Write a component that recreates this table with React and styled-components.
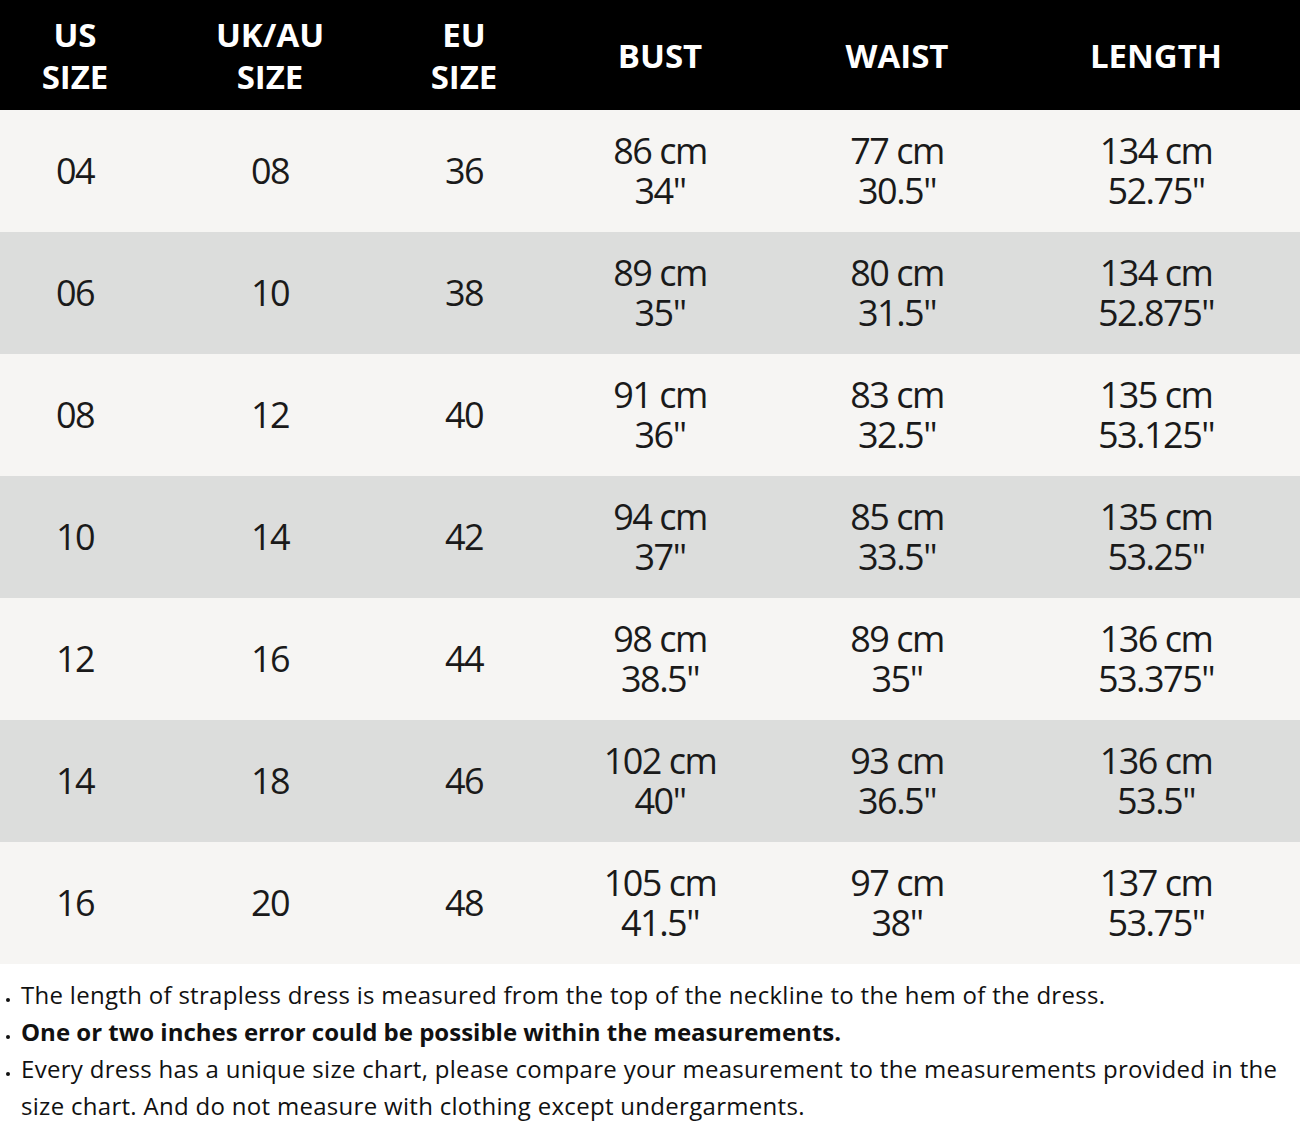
import React from 'react'
import styled, { createGlobalStyle } from 'styled-components'

const GlobalStyle = createGlobalStyle`
  html, body {
    margin: 0;
    padding: 0;
    background: #ffffff;
  }
  body {
    font-family: "Open Sans", "Noto Sans", sans-serif;
    color: #111;
  }
`

const Page = styled.div`
  width: 1300px;
  background: #fff;
`

const Table = styled.div`
  display: grid;
  grid-template-columns: 150px 240px 148px 244px 230px 288px;
`

const HeadCell = styled.div`
  height: 110px;
  background: #000;
  color: #fff;
  display: flex;
  align-items: center;
  justify-content: center;
  text-align: center;
  font-weight: 700;
  font-size: 33px;
  line-height: 42px;
  letter-spacing: 0;
  padding-top: 2px;
  box-sizing: border-box;
`

const Cell = styled.div`
  height: 122px;
  background: ${p => (p.$shade ? '#dcdddc' : '#f6f5f3')};
  color: #1a1a1a;
  display: flex;
  flex-direction: column;
  align-items: center;
  justify-content: center;
  text-align: center;
  font-size: 36px;
  line-height: 40px;
  letter-spacing: -1.5px;
`

const Line = styled.span`
  display: block;
  white-space: nowrap;
`

const Notes = styled.ul`
  list-style: none;
  margin: 0;
  padding: 12px 20px 0 21px;
  font-size: 24px;
  line-height: 37px;
  color: #111;
  letter-spacing: 0.3px;
`

const Note = styled.li`
  position: relative;
  font-weight: ${p => (p.$bold ? 700 : 400)};
  letter-spacing: ${p => (p.$bold ? '0' : '0.3px')};

  &::before {
    content: '';
    position: absolute;
    left: -15px;
    top: 22px;
    width: 4px;
    height: 4px;
    border-radius: 50%;
    background: #111;
  }
`

const headers = [['US', 'SIZE'], ['UK/AU', 'SIZE'], ['EU', 'SIZE'], ['BUST'], ['WAIST'], ['LENGTH']]

const rows = [
  ['04', '08', '36', ['86 cm', '34"'], ['77 cm', '30.5"'], ['134 cm', '52.75"']],
  ['06', '10', '38', ['89 cm', '35"'], ['80 cm', '31.5"'], ['134 cm', '52.875"']],
  ['08', '12', '40', ['91 cm', '36"'], ['83 cm', '32.5"'], ['135 cm', '53.125"']],
  ['10', '14', '42', ['94 cm', '37"'], ['85 cm', '33.5"'], ['135 cm', '53.25"']],
  ['12', '16', '44', ['98 cm', '38.5"'], ['89 cm', '35"'], ['136 cm', '53.375"']],
  ['14', '18', '46', ['102 cm', '40"'], ['93 cm', '36.5"'], ['136 cm', '53.5"']],
  ['16', '20', '48', ['105 cm', '41.5"'], ['97 cm', '38"'], ['137 cm', '53.75"']],
]

export default function App() {
  return (
    <Page>
      <GlobalStyle />
      <Table>
        {headers.map((h, i) => (
          <HeadCell key={i}>
            <div>
              {h.map(t => (
                <Line key={t}>{t}</Line>
              ))}
            </div>
          </HeadCell>
        ))}
        {rows.map((row, r) =>
          row.map((v, c) => (
            <Cell key={`${r}-${c}`} $shade={r % 2 === 1}>
              {(Array.isArray(v) ? v : [v]).map(t => (
                <Line key={t}>{t}</Line>
              ))}
            </Cell>
          ))
        )}
      </Table>
      <Notes>
        <Note>The length of strapless dress is measured from the top of the neckline to the hem of the dress.</Note>
        <Note $bold>One or two inches error could be possible within the measurements.</Note>
        <Note>
          Every dress has a unique size chart, please compare your measurement to the measurements provided in the
          size chart. And do not measure with clothing except undergarments.
        </Note>
      </Notes>
    </Page>
  )
}
